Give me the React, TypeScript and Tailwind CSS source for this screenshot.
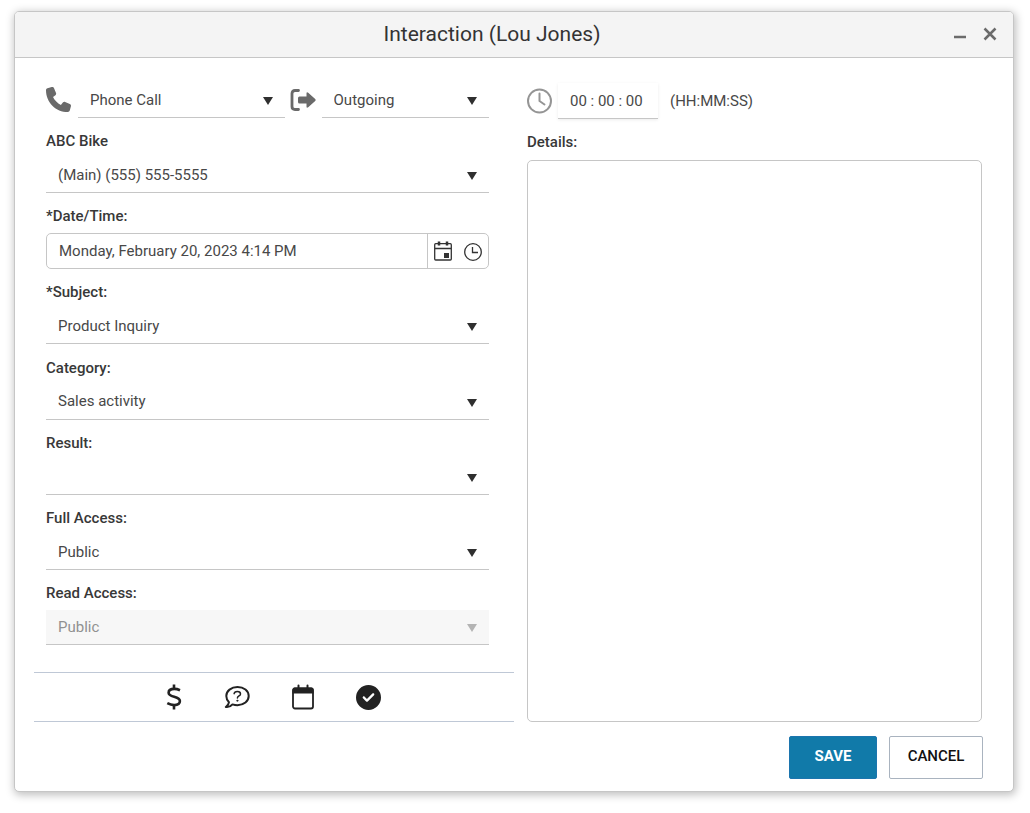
import React, { useState } from 'react';
import { FaCircleCheck, FaPhone } from 'react-icons/fa6';

interface SelectProps {
  id: string;
  options: string[];
  className?: string;
  disabled?: boolean;
  ariaLabel?: string;
}

const Select: React.FC<SelectProps> = ({ id, options, className = '', disabled, ariaLabel }) => {
  const [value, setValue] = useState(options[0]);

  return (
    <div className={`relative ${className}`}>
      <select
        id={id}
        aria-label={ariaLabel}
        value={value}
        disabled={disabled}
        onChange={(e) => setValue(e.target.value)}
        className="block w-full h-[35px] pl-3 pr-8 appearance-none border-b border-[#c6c6c6] bg-white text-[#484848] disabled:bg-[#f7f7f7] disabled:text-[#919191] disabled:opacity-100"
      >
        {options.map((option) => (
          <option key={option}>{option}</option>
        ))}
      </select>
      <svg
        viewBox="0 0 10 8"
        className={`absolute right-3 top-[14px] w-[10px] h-2 pointer-events-none ${disabled ? 'fill-[#b4b4b4]' : 'fill-[#2f2f2f]'}`}
      >
        <path d="M0 0h10L5 8z" />
      </svg>
    </div>
  );
};

interface FieldProps {
  id: string;
  label: string;
  children: React.ReactNode;
}

const Field: React.FC<FieldProps> = ({ id, label, children }) => (
  <div>
    <label htmlFor={id} className="block mb-[7px] leading-5 font-medium text-[#383838]">
      {label}
    </label>
    {children}
  </div>
);

const OutgoingIcon = () => (
  <svg viewBox="0 0 26 24" className="block w-[26px] h-6 shrink-0" fill="none">
    <path d="M8.5 2.5H5Q2 2.5 2 5.5v13Q2 21.5 5 21.5h3.5" stroke="#6a6a6a" strokeWidth="2.800" strokeLinecap="round" />
    <path d="M9.500 8.500h7V5.500q0-2 1.700-.8l7 6.300q.9 1 0 2l-7 6.300q-1.700 1.200-1.700-.8v-3h-7q-1.500 0-1.500-1.500v-4q0-1.500 1.500-1.500z" fill="#6a6a6a" />
  </svg>
);

const DurationIcon = () => (
  <svg viewBox="0 0 26 26" className="w-[26px] h-[26px] shrink-0" fill="none" stroke="#959595" strokeWidth="2">
    <circle cx="12.500" cy="13" r="11.500" />
    <path d="M12.500 5.500v7.500l5 3.500" strokeLinecap="round" strokeLinejoin="round" />
  </svg>
);

const DateIcon = () => (
  <svg viewBox="0 0 18 20" className="block w-[18px] h-5" fill="none" stroke="#333">
    <rect x=".7" y="2.700" width="16.600" height="16.300" rx="1" strokeWidth="1.300" />
    <path d="M1 7.500h16" strokeWidth="1.300" />
    <path d="M5 .5v4M13 .5v4" strokeWidth="2.500" />
    <rect x="10" y="12" width="5" height="5" fill="#333" stroke="none" />
  </svg>
);

const TimeIcon = () => (
  <svg viewBox="0 0 18 20" className="block w-[18px] h-5" fill="none" stroke="#333" strokeWidth="1.300">
    <circle cx="9" cy="11" r="8.300" />
    <path d="M8.500 6v5.500h5.500" />
  </svg>
);

const DollarIcon = () => (
  <svg viewBox="0 0 16 26" className="block w-4 h-[26px]" fill="none" stroke="#222" strokeWidth="2.600">
    <path d="M8 .5v5M8 20.500v5" />
    <path d="M14 6.200C12 5.300 10 4.900 8.300 4.900 4.900 4.900 2.600 6.400 2.600 8.700c0 5.200 11.300 3 11.300 8.400 0 2.500-2.300 4-5.700 4-2.400 0-4.700-.7-6.900-1.900" />
  </svg>
);

const QuestionBubbleIcon = () => (
  <svg viewBox="0 0 26 24" className="block w-[26px] h-6" fill="none" stroke="#222" strokeLinecap="round" strokeLinejoin="round">
    <path d="M13.500 2C7.200 2 2.300 6 2.300 11c0 2.500 1 4.600 2.700 6.200-.2 1.900-1.300 3.600-3.200 4.800 2.500.4 4.900-.5 6.700-2.600 1.500.5 3.200.8 5 .8 6.300 0 11.200-4.100 11.200-9.200S19.800 2 13.500 2z" strokeWidth="2" />
    <path d="M10.100 8.700c.2-1.500 1.400-2.300 3.200-2.300 1.900 0 3.200 1 3.200 2.500 0 2.100-3.100 2-3.100 4.200" strokeWidth="1.500" />
    <circle cx="13.300" cy="15.700" r=".6" fill="#222" strokeWidth=".8" />
  </svg>
);

const CalendarIcon = () => (
  <svg viewBox="0 0 22 26" className="block w-[22px] h-[26px]" fill="none" stroke="#222">
    <rect x="1" y="4.500" width="20" height="20" rx="2" strokeWidth="1.800" />
    <path d="M.5 9.500V5.500q0-2 2-2h17q2 0 2 2v4z" fill="#222" stroke="none" />
    <path d="M6.500 1.500v3M15.500 1.500v3" strokeWidth="2" strokeLinecap="round" />
  </svg>
);

export default function App() {
  const [dateTime, setDateTime] = useState('Monday, February 20, 2023 4:14 PM');
  const [duration, setDuration] = useState('00 : 00 : 00');
  const [details, setDetails] = useState('');

  return (
    <div className="min-h-screen flex bg-white pt-[11px] pr-4 pb-[21px] pl-[14px] font-[Roboto,sans-serif] text-[15px] text-[#484848]">
      <div role="dialog" aria-labelledby="title" className="flex-1 flex flex-col bg-white border border-[#c6c6c6] rounded-[5px] overflow-hidden shadow-[1px_2px_9px_1px_rgba(0,0,0,0.25)]">
        {/* Title bar */}
        <header className="flex items-center h-[46px] pr-4 pb-[2px] border-b border-[#c6c6c6] bg-[#f4f4f4]">
          <h1 id="title" className="flex-1 pl-4 text-center text-[21px] leading-7 text-[#333]">Interaction (Lou Jones)</h1>
          <div className="flex items-center gap-4">
            <button type="button" aria-label="Minimize">
              <svg viewBox="0 0 14 14" className="block w-[14px] h-[14px]">
                <path d="M1 10h12" stroke="#6b6b6b" strokeWidth="2.500" />
              </svg>
            </button>
            <button type="button" aria-label="Close">
              <svg viewBox="0 0 14 14" className="block w-[14px] h-[14px]">
                <path d="M1.500 1.500l11 11M12.500 1.500l-11 11" stroke="#6b6b6b" strokeWidth="2.500" />
              </svg>
            </button>
          </div>
        </header>

        <form className="flex-1 flex flex-col pt-[25px] pr-[30px] pb-3 pl-[19px]" onSubmit={(e) => e.preventDefault()}>
          <div className="flex-1 grid grid-cols-[480fr_455fr] gap-x-[13px] pr-px">
            <div className="flex flex-col">
              <div className="flex-1 flex flex-col justify-between pl-3 pr-[25px]">
                <div className="flex items-center">
                  <FaPhone className="w-[25px] h-[25px] mr-[7px] mb-[2px] shrink-0 text-[#6a6a6a]" />
                  <Select id="type" ariaLabel="Type" options={['Phone Call', 'Email', 'Meeting']} className="flex-[206]" />
                  <div className="pl-[5px] pr-[6px] pb-[2px]">
                    <OutgoingIcon />
                  </div>
                  <Select id="direction" ariaLabel="Direction" options={['Outgoing', 'Incoming']} className="flex-[167]" />
                </div>

                <Field id="phone" label="ABC Bike">
                  <Select id="phone" options={['(Main) (555) 555-5555']} />
                </Field>

                <Field id="date" label="*Date/Time:">
                  <div className="flex h-9 border border-[#c6c6c6] rounded-[5px]">
                    <input
                      id="date"
                      type="text"
                      value={dateTime}
                      onChange={(e) => setDateTime(e.target.value)}
                      className="flex-1 min-w-0 px-3"
                    />
                    <div className="flex items-center gap-3 px-[6px] border-l border-[#c6c6c6]">
                      <button type="button" aria-label="Pick a date"><DateIcon /></button>
                      <button type="button" aria-label="Pick a time"><TimeIcon /></button>
                    </div>
                  </div>
                </Field>

                <Field id="subject" label="*Subject:">
                  <Select id="subject" options={['Product Inquiry']} />
                </Field>
                <Field id="category" label="Category:">
                  <Select id="category" options={['Sales activity']} />
                </Field>
                <Field id="result" label="Result:">
                  <Select id="result" options={['']} />
                </Field>
                <Field id="full-access" label="Full Access:">
                  <Select id="full-access" options={['Public', 'Private']} />
                </Field>
                <Field id="read-access" label="Read Access:">
                  <Select id="read-access" options={['Public']} disabled />
                </Field>
              </div>

              {/* Follow-up actions */}
              <div className="flex items-center justify-center gap-[42px] h-[50px] mt-[27px] pr-[2px] border-y border-[#bfc8d6] text-[#222]">
                <button type="button" aria-label="Add opportunity"><DollarIcon /></button>
                <button type="button" aria-label="Add case"><QuestionBubbleIcon /></button>
                <button type="button" aria-label="Add appointment"><CalendarIcon /></button>
                <button type="button" aria-label="Add task">
                  <FaCircleCheck className="block w-[25px] h-[25px]" />
                </button>
              </div>
            </div>

            <div className="flex flex-col">
              <div className="flex items-center mb-[13px]">
                <DurationIcon />
                <input
                  type="text"
                  aria-label="Duration"
                  value={duration}
                  onChange={(e) => setDuration(e.target.value)}
                  className="w-[100px] h-9 ml-[5px] mr-3 px-3 border-b border-[#c6c6c6] shadow-[0_1px_3px_rgba(0,0,0,0.08)]"
                />
                <span>(HH:MM:SS)</span>
              </div>
              <label htmlFor="details" className="block mb-2 leading-5 font-medium text-[#383838]">Details:</label>
              <textarea
                id="details"
                value={details}
                onChange={(e) => setDetails(e.target.value)}
                className="flex-1 w-full min-h-40 p-3 border border-[#c6c6c6] rounded-[5px] resize-none"
              />
            </div>
          </div>

          <div className="flex justify-end gap-3 mt-[14px]">
            <button type="submit" className="w-[88px] h-[43px] pb-[2px] rounded-[2px] border border-[#1c75ae] bg-[#117aa9] font-bold text-white">
              SAVE
            </button>
            <button type="button" className="w-[94px] h-[43px] pb-[2px] rounded-[2px] border border-[#a9b3bf] bg-white font-medium text-[#111]">
              CANCEL
            </button>
          </div>
        </form>
      </div>
    </div>
  );
}
